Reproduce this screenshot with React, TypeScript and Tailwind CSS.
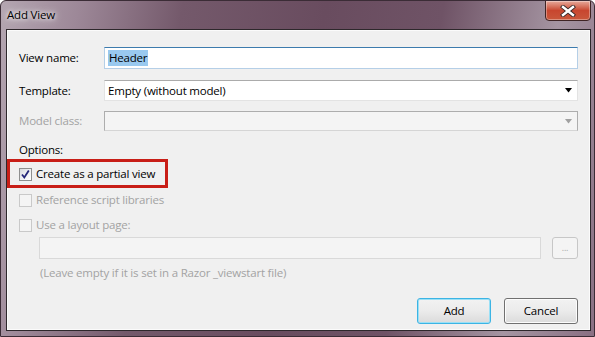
import React from "react";

function CheckBox({ checked, disabled }: { checked?: boolean; disabled?: boolean }) {
    return (
        <div
            className={
                "w-[13px] h-[13px] shrink-0 border flex items-center justify-center " +
                (disabled
                    ? "border-[#c9c9c9] bg-[#f4f4f4]"
                    : "border-[#8e8f8f] bg-gradient-to-br from-[#d6d9de] via-[#eef0f3] to-[#ffffff]")
            }
        >
            {checked && (
                <svg width="11" height="11" viewBox="0 0 11 11">
                    <path d="M2 5.5 L4.3 8.5 L8.8 1.5" fill="none" stroke="#24277a" strokeWidth="1.8" />
                </svg>
            )}
        </div>
    );
}

function Arrow({ disabled }: { disabled?: boolean }) {
    return (
        <svg width="8" height="5" viewBox="0 0 8 5" className="mr-[4px]">
            <path d="M0 0 H7 L3.5 4.5 Z" fill={disabled ? "#a0a0a0" : "#000"} />
        </svg>
    );
}

export default function App() {
    return (
        <div
            className="w-[595px] h-[337px] relative overflow-hidden rounded-t-[6px] border border-[#3b2c36] flex flex-col text-[11.5px] tracking-[-0.2px] text-black"
            style={{
                fontFamily: '"Open Sans", "Noto Sans", sans-serif',
                background:
                    "linear-gradient(100deg, #b4a6b1 0%, #9d8898 12%, #74596b 28%, #694c5f 50%, #6f5366 68%, #a595a2 86%, #8a7083 100%)",
            }}
        >
            {/* title bar */}
            <div className="h-[28px] flex items-center pl-[6px] shrink-0">
                <span className="[text-shadow:0_0_8px_#fff,0_0_4px_#fff]">Add View</span>
            </div>
            <div className="absolute top-[-1px] right-[3px] w-[46px] h-[21px] rounded-b-[4px] border border-[#3f2424] bg-gradient-to-b from-[#e6a99b] via-[#c8462f] to-[#c9573b] shadow-[inset_0_0_0_1px_rgba(255,255,255,0.35)] flex items-center justify-center">
                <svg width="16" height="12" viewBox="0 0 16 12">
                    <path d="M3 2 L13 10 M13 2 L3 10" stroke="#3a2a2a" strokeWidth="4.2" strokeLinecap="square" />
                    <path d="M3 2 L13 10 M13 2 L3 10" stroke="#ffffff" strokeWidth="2.4" strokeLinecap="square" />
                </svg>
            </div>

            {/* client area */}
            <div className="ml-[5px] mr-[3px] mb-[5px] flex-1 border border-[#2e282c] bg-[#f0f0f0] shadow-[inset_0_0_0_1px_#fbfbfb] flex flex-col px-[12px] relative">
                <div className="mt-[17px] h-[22px] flex items-center">
                    <span className="w-[85px]">View name:</span>
                    <div className="flex-1 h-[22px] bg-white border border-[#b5cfe7] border-t-[#3d7bad] flex items-center pl-[3px]">
                        <span className="bg-[#99c9ef] px-[1px] leading-[16px]">Header</span>
                    </div>
                </div>
                <div className="mt-[11px] h-[21px] flex items-center">
                    <span className="w-[85px]">Template:</span>
                    <div className="flex-1 h-[21px] bg-white border border-[#e3e3e3] border-t-[#ababab] flex items-center justify-between pl-[3px]">
                        <span>Empty (without model)</span>
                        <Arrow />
                    </div>
                </div>
                <div className="mt-[10px] h-[20px] flex items-center">
                    <span className="w-[85px] text-[#a3a3a3]">Model class:</span>
                    <div className="flex-1 h-[20px] bg-[#f4f4f4] border border-[#adadad] border-b-[#d5d5d5] flex items-center justify-end">
                        <Arrow disabled />
                    </div>
                </div>
                <div className="mt-[11px] leading-[16px]">Options:</div>
                <div className="mt-[8px] h-[16px] flex items-center gap-[4px] relative">
                    <CheckBox checked />
                    <span>Create as a partial view</span>
                    <div className="absolute left-[-12px] top-[-7px] w-[161px] h-[29px] border-[3px] border-[#c81e17]" />
                </div>
                <div className="mt-[10px] h-[16px] flex items-center gap-[4px] text-[#a3a3a3]">
                    <CheckBox disabled />
                    <span>Reference script libraries</span>
                </div>
                <div className="mt-[9px] h-[16px] flex items-center gap-[4px] text-[#a3a3a3]">
                    <CheckBox disabled />
                    <span>Use a layout page:</span>
                </div>
                <div className="mt-[4px] pl-[20px] flex items-center gap-[11px]">
                    <div className="flex-1 h-[22px] bg-[#f4f4f4] border border-[#d9d9d9]" />
                    <div className="w-[26px] h-[22px] rounded-[3px] border border-[#c7c7c7] bg-[#f4f4f4] flex items-center justify-center text-[#a8a8a8] text-[9px] leading-none pb-[2px]">
                        ...
                    </div>
                </div>
                <div className="mt-[6px] pl-[21px] leading-[16px] text-[#a3a3a3]">
                    (Leave empty if it is set in a Razor _viewstart file)
                </div>
                <div className="mt-auto mb-[6px] flex justify-end gap-[13px]">
                    <div className="w-[74px] h-[26px] rounded-[3px] border border-[#3cb4e4] shadow-[inset_0_0_0_1px_#9be0f6] bg-gradient-to-b from-[#f2f2f2] via-[#ebebeb] to-[#dbdbdb] flex items-center justify-center">
                        Add
                    </div>
                    <div className="w-[74px] h-[26px] rounded-[3px] border border-[#707070] shadow-[inset_0_0_0_1px_#fcfcfc] bg-gradient-to-b from-[#f2f2f2] via-[#ebebeb] to-[#dbdbdb] flex items-center justify-center">
                        Cancel
                    </div>
                </div>
            </div>
        </div>
    );
}
